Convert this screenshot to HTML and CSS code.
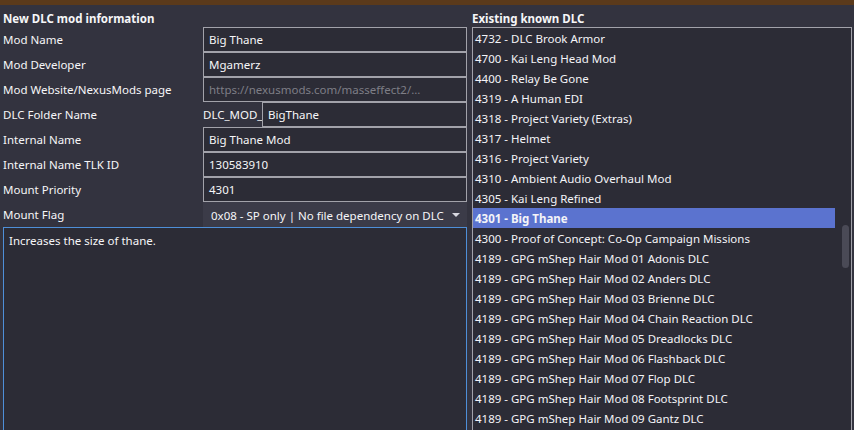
FILE: index.html
```html
<!DOCTYPE html>
<html>
<head>
<meta charset="utf-8">
<link rel="stylesheet" href="styles.css">
</head>
<body>
<div class="topbar"></div>
<div class="main">
  <div class="left">
    <div class="heading">New DLC mod information</div>
    <div class="row"><div class="label">Mod Name</div><div class="box">Big Thane</div></div>
    <div class="row"><div class="label">Mod Developer</div><div class="box">Mgamerz</div></div>
    <div class="row"><div class="label">Mod Website/NexusMods page</div><div class="box placeholder">https://nexusmods.com/masseffect2/...</div></div>
    <div class="row"><div class="label">DLC Folder Name</div><div class="folder"><span class="prefix">DLC_MOD_</span><div class="box grow">BigThane</div></div></div>
    <div class="row"><div class="label">Internal Name</div><div class="box">Big Thane Mod</div></div>
    <div class="row"><div class="label">Internal Name TLK ID</div><div class="box">130583910</div></div>
    <div class="row"><div class="label">Mount Priority</div><div class="box">4301</div></div>
    <div class="row"><div class="label">Mount Flag</div><div class="combo"><span class="combotext">0x08 - SP only | No file dependency on DLC</span><svg class="arrow" width="8" height="4" viewBox="0 0 8 4"><path d="M0 0 L8 0 L4 4 Z" fill="#d8d8e0"/></svg></div></div>
    <div class="desc">Increases the size of thane.</div>
  </div>
  <div class="right">
    <div class="heading">Existing known DLC</div>
    <div class="list">
      <div class="items">
        <div class="item">4732 - DLC Brook Armor</div>
        <div class="item">4700 - Kai Leng Head Mod</div>
        <div class="item">4400 - Relay Be Gone</div>
        <div class="item">4319 - A Human EDI</div>
        <div class="item">4318 - Project Variety (Extras)</div>
        <div class="item">4317 - Helmet</div>
        <div class="item">4316 - Project Variety</div>
        <div class="item">4310 - Ambient Audio Overhaul Mod</div>
        <div class="item">4305 - Kai Leng Refined</div>
        <div class="item selected">4301 - Big Thane</div>
        <div class="item">4300 - Proof of Concept: Co-Op Campaign Missions</div>
        <div class="item">4189 - GPG mShep Hair Mod 01 Adonis DLC</div>
        <div class="item">4189 - GPG mShep Hair Mod 02 Anders DLC</div>
        <div class="item">4189 - GPG mShep Hair Mod 03 Brienne DLC</div>
        <div class="item">4189 - GPG mShep Hair Mod 04 Chain Reaction DLC</div>
        <div class="item">4189 - GPG mShep Hair Mod 05 Dreadlocks DLC</div>
        <div class="item">4189 - GPG mShep Hair Mod 06 Flashback DLC</div>
        <div class="item">4189 - GPG mShep Hair Mod 07 Flop DLC</div>
        <div class="item">4189 - GPG mShep Hair Mod 08 Footsprint DLC</div>
        <div class="item">4189 - GPG mShep Hair Mod 09 Gantz DLC</div>
      </div>
      <div class="scrolltrack"><div class="thumb"></div></div>
    </div>
  </div>
</div>
</body>
</html>
```

FILE: styles.css
```css
html, body {
  margin: 0;
  padding: 0;
  height: 100%;
  overflow: hidden;
}
body {
  background: #33333f;
  font-family: "Noto Sans", "Open Sans", sans-serif;
  font-size: 11.5px;
  color: #f6f6f8;
}
.topbar {
  height: 5px;
  background: #5b3a1b;
}
.main {
  display: grid;
  grid-template-columns: 464px 380px;
  column-gap: 5px;
  padding-left: 3px;
}
.heading {
  height: 22px;
  box-sizing: border-box;
  padding-top: 5px;
  line-height: 17px;
  font-weight: bold;
}
.row {
  display: flex;
  height: 25px;
}
.label {
  width: 200px;
  line-height: 26px;
  white-space: nowrap;
}
.box {
  width: 264px;
  height: 25px;
  box-sizing: border-box;
  border: 1px solid #a2a2aa;
  background: #2c2c36;
  padding-left: 5px;
  line-height: 24px;
  color: #f6f6f8;
  white-space: nowrap;
  overflow: hidden;
}
.box.placeholder {
  color: #7e7e86;
}
.folder {
  display: flex;
  width: 264px;
}
.prefix {
  width: 59px;
  line-height: 26px;
  white-space: nowrap;
}
.box.grow {
  flex: 1;
  width: auto;
}
.combo {
  width: 264px;
  height: 25px;
  box-sizing: border-box;
  background: #3b3b48;
  display: flex;
  align-items: center;
  justify-content: space-between;
  padding: 1px 7px 0 8px;
}
.combotext {
  white-space: nowrap;
}
.arrow {
  display: block;
  margin-top: -1px;
}
.desc {
  width: 464px;
  height: 220px;
  box-sizing: border-box;
  border: 1px solid #4e8fd8;
  background: #2c2c36;
  padding: 5px 5px;
  line-height: 16px;
}
.list {
  display: flex;
  height: 420px;
  box-sizing: border-box;
  border: 1px solid #a2a2aa;
  background: #2c2c36;
}
.items {
  flex: 1;
  overflow: hidden;
}
.item {
  height: 20px;
  line-height: 22px;
  padding-left: 2px;
  white-space: nowrap;
  color: #f4f4f8;
}
.item.selected {
  background: #5b73cf;
  font-weight: bold;
}
.scrolltrack {
  width: 16px;
}
.thumb {
  margin-top: 197px;
  margin-left: 7px;
  width: 7px;
  height: 43px;
  border-radius: 4px;
  background: #4a4a56;
}
```
